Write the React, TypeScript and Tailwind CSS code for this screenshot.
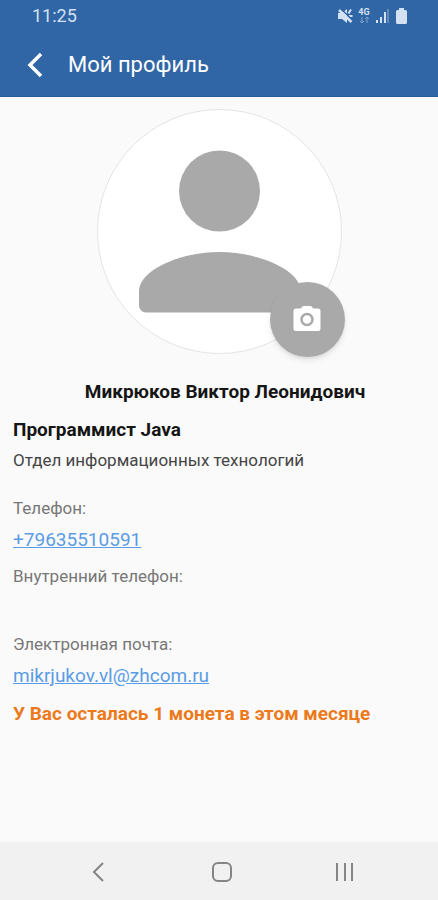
import React from 'react';

const contacts = [
  { id: 'phone', label: 'Телефон:', value: '+79635510591', href: 'tel:+79635510591' },
  { id: 'extension', label: 'Внутренний телефон:', value: '', href: '' },
  { id: 'email', label: 'Электронная почта:', value: 'mikrjukov.vl@zhcom.ru', href: 'mailto:mikrjukov.vl@zhcom.ru' },
];

function StatusBar() {
  return (
    <div className="flex h-8 items-center justify-between px-8 text-[#d3e1f3]">
      <span className="text-lg leading-6">11:25</span>
      <div className="-mr-1 flex items-center gap-[3px]">
        {/* Muted sound */}
        <svg className="h-4 w-4" viewBox="0 0 16 16" fill="currentColor">
          <path d="M1 5h4l5-4v14l-5-4H1z" />
          <path d="M11.500 5.500l2.500-4M12 8h3.500" stroke="currentColor" strokeWidth="2" />
          <path d="M3.500 .5l12.500 12" stroke="#3166a6" strokeWidth="1.500" />
          <path d="M2 2l12.500 12" stroke="currentColor" strokeWidth="2.500" />
        </svg>
        <div className="flex w-4 flex-col items-center">
          <span className="text-[9px] font-bold leading-2">4G</span>
          <svg className="h-2 w-3" viewBox="0 0 12 8" fill="none" stroke="currentColor" opacity="0.5">
            <path d="M4 1v6M2 5l2 2 2-2M9 7V1M7 3l2-2 2 2" />
          </svg>
        </div>
        {/* Signal */}
        <svg className="h-4 w-4" viewBox="0 0 16 16" fill="currentColor">
          <path d="M1 12h2v3H1zM5 9h2v6H5zM9 4h2v11H9z" />
          <path d="M12 1h2v14h-2z" opacity="0.3" />
        </svg>
        {/* Battery */}
        <svg className="h-4 w-4" viewBox="0 0 16 16" fill="currentColor">
          <path d="M5 0h5v2h1.500A1.500 1.500 0 0 1 13 3.500v11a1.500 1.500 0 0 1-1.500 1.500h-8A1.500 1.500 0 0 1 2 14.500v-11A1.500 1.500 0 0 1 3.500 2H5z" />
        </svg>
      </div>
    </div>
  );
}

function Avatar() {
  return (
    <div className="relative mx-auto h-[245px] w-[245px] rounded-full border border-[#e4e4e4] bg-white">
      <svg className="h-full w-full" viewBox="0 0 243 243" fill="#a9a9a9">
        <circle cx="121.500" cy="81" r="40.500" />
        <path d="M41 182C41 159 84 142 121.500 142S203 159 203 182V195.500a7 7 0 0 1-7 7H48a7 7 0 0 1-7-7z" />
      </svg>
      <button
        type="button"
        aria-label="Изменить фото"
        className="absolute -bottom-1 -right-1 flex h-[75px] w-[75px] items-center justify-center rounded-full bg-[#a9a9a9] shadow-md"
      >
        <svg className="h-8 w-8" viewBox="0 0 32 32">
          <path
            d="M12 2h8l2.500 2.500H27A2.500 2.500 0 0 1 29.500 7v17.500A2.500 2.500 0 0 1 27 27H5a2.500 2.500 0 0 1-2.500-2.500V7A2.500 2.500 0 0 1 5 4.500h4.500z"
            fill="white"
          />
          <circle cx="16" cy="15.500" r="5.500" fill="white" stroke="#a9a9a9" strokeWidth="2.500" />
        </svg>
      </button>
    </div>
  );
}

export default function App() {
  return (
    <div className="flex min-h-screen flex-col bg-[#fafafa] font-[Roboto,sans-serif]">
      <header className="border-b border-[#285d98] bg-[#3166a6]">
        <StatusBar />
        <div className="flex h-16 items-center gap-5 pl-5 pt-px text-white">
          <button type="button" aria-label="Назад" className="flex h-8 w-7 items-center justify-center">
            <svg className="h-7 w-7" viewBox="0 0 28 28" fill="none" stroke="currentColor" strokeWidth="3.500">
              <path d="M21 3L10 14l11 11" />
            </svg>
          </button>
          <h1 className="text-[22px] leading-6">Мой профиль</h1>
        </div>
      </header>

      <main className="flex-1 px-[13px] pt-3">
        <Avatar />

        <h2 className="mt-[26px] pl-3 text-center text-[19px] font-bold leading-6 text-[#151515]">
          Микрюков Виктор Леонидович
        </h2>
        <p className="mt-3.5 text-[19px] font-bold leading-6 text-[#151515]">Программист Java</p>
        <p className="mt-1 text-[17px] leading-7 text-[#454545]">Отдел информационных технологий</p>

        <dl className="mt-[22px]">
          {contacts.map((contact) => (
            <div key={contact.id} className="mb-3">
              <dt className="text-[17px] leading-6 text-[#777777]">{contact.label}</dt>
              <dd className="mt-2 h-6 text-[19px] leading-6">
                {contact.value && (
                  <a href={contact.href} className="text-[#5a9ce6] underline">
                    {contact.value}
                  </a>
                )}
              </dd>
            </div>
          ))}
        </dl>

        <p className="mt-3.5 text-[19px] font-bold leading-6 text-[#ec7a1c]">У Вас осталась 1 монета в этом месяце</p>
      </main>

      {/* Android navigation */}
      <nav className="flex h-[58px] items-center justify-around bg-[#f1f1f1] pl-9 pr-8 text-[#858585]">
        <button type="button" aria-label="Назад">
          <svg className="h-6 w-6" viewBox="0 0 24 24" fill="none" stroke="currentColor" strokeWidth="2">
            <path d="M17 4l-9 9 9 9" />
          </svg>
        </button>
        <button type="button" aria-label="Домой">
          <svg className="h-6 w-6" viewBox="0 0 24 24" fill="none" stroke="currentColor" strokeWidth="2">
            <rect x="4" y="4" width="18" height="18" rx="5" />
          </svg>
        </button>
        <button type="button" aria-label="Недавние">
          <svg className="h-6 w-6" viewBox="0 0 24 24" fill="none" stroke="currentColor" strokeWidth="2">
            <path d="M5 4v18M13 4v18M20 4v18" />
          </svg>
        </button>
      </nav>
    </div>
  );
}
